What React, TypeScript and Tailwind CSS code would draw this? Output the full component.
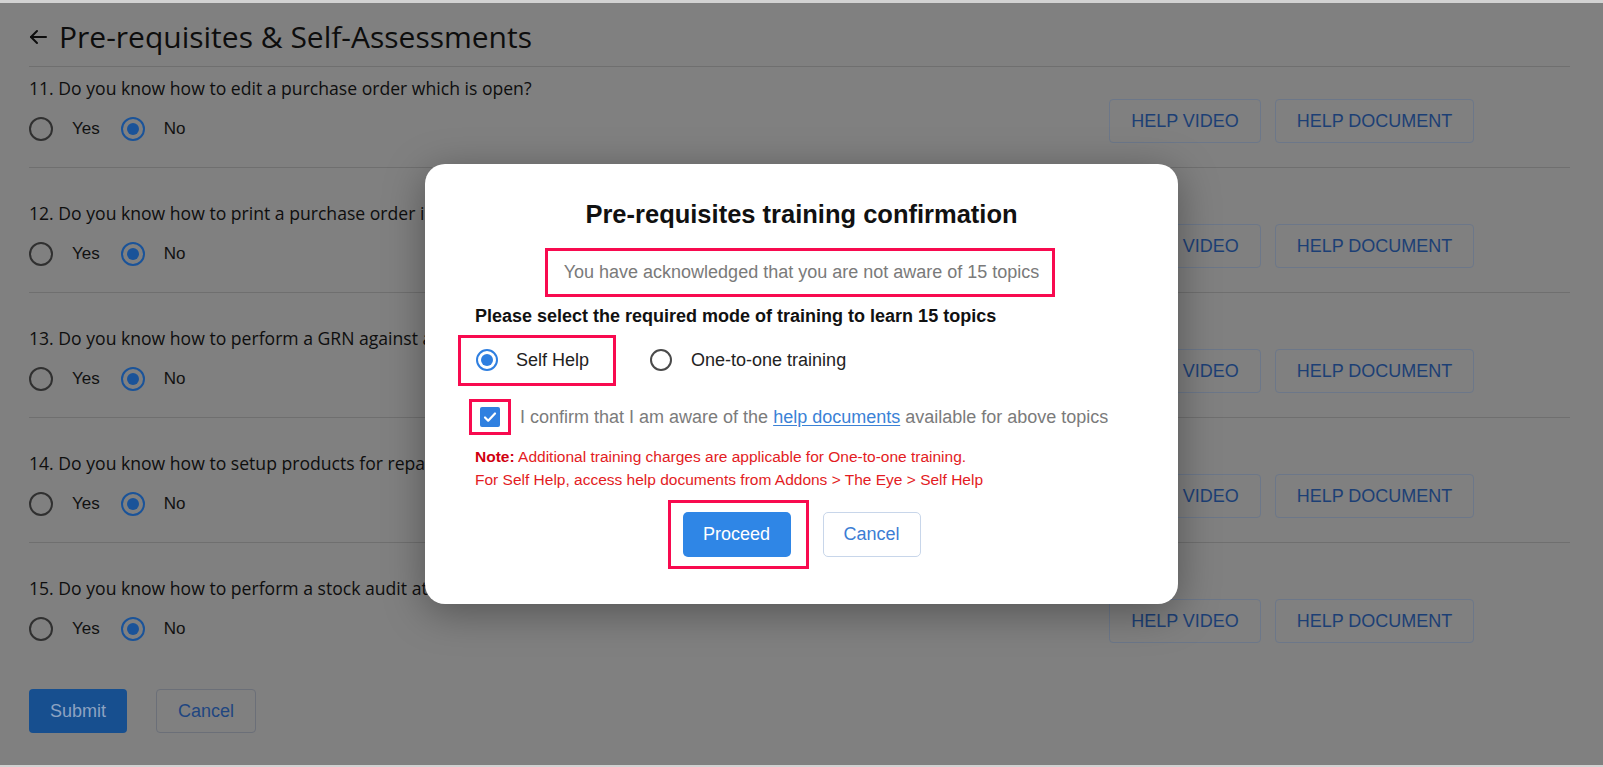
import React from "react";

const questions = [
  "11. Do you know how to edit a purchase order which is open?",
  "12. Do you know how to print a purchase order in PDF format?",
  "13. Do you know how to perform a GRN against a purchase order?",
  "14. Do you know how to setup products for repair and service?",
  "15. Do you know how to perform a stock audit at a location?",
];

function PageRadio({ checked }: { checked: boolean }) {
  return checked ? (
    <span className="flex h-[24px] w-[24px] items-center justify-center rounded-full border-2 border-[#1a5399]">
      <span className="h-[12px] w-[12px] rounded-full bg-[#1a5399]" />
    </span>
  ) : (
    <span className="h-[24px] w-[24px] rounded-full border-2 border-[#303030]" />
  );
}

function ModalRadio({ checked }: { checked: boolean }) {
  return checked ? (
    <span className="flex h-[22px] w-[22px] items-center justify-center rounded-full border-2 border-[#2f7fe0]">
      <span className="h-[12px] w-[12px] rounded-full bg-[#2f7fe0]" />
    </span>
  ) : (
    <span className="h-[22px] w-[22px] rounded-full border-2 border-[#4a4a4a]" />
  );
}

function QuestionRow({ text, first, last }: { text: string; first: boolean; last: boolean }) {
  return (
    <div
      className={`flex ${first ? "pt-[9px]" : "pt-[33px]"} pb-[24px] ${last ? "" : "border-b border-[#6f6f6f]"}`}
    >
      <div className="w-[1080px]">
        <div className="text-[17.6px] leading-[24px] text-[#0e0e0e] [font-family:'Open_Sans',sans-serif]">{text}</div>
        <div className="mt-[16px] flex h-[26px] items-center text-[17px] text-[#111] [font-family:'Liberation_Sans',Arial,sans-serif]">
          <PageRadio checked={false} />
          <span className="ml-[19px]">Yes</span>
          <span className="ml-[21px]">
            <PageRadio checked={true} />
          </span>
          <span className="ml-[19px]">No</span>
        </div>
      </div>
      <div className="mt-[23px] flex gap-[14px] self-start [font-family:'Liberation_Sans',Arial,sans-serif]">
        <div className="flex h-[44px] w-[152px] items-center justify-center rounded-[4px] border border-[#6c7789] text-[18px] text-[#1c3f75]">
          HELP VIDEO
        </div>
        <div className="flex h-[44px] w-[199px] items-center justify-center rounded-[4px] border border-[#6c7789] text-[18px] text-[#1c3f75]">
          HELP DOCUMENT
        </div>
      </div>
    </div>
  );
}

export default function App() {
  return (
    <div className="relative h-[767px] w-[1603px] overflow-hidden border-t-[3px] border-b-[2px] border-[#d2d2d2] bg-[#808080]">
      <div className="ml-[29px] w-[1541px]">
        <div className="flex items-center gap-[12px] border-b border-[#6f6f6f] pt-[16px] pb-[11px]">
          <svg width="18" height="16" viewBox="0 0 18 16" fill="none" stroke="#0d0d0d" strokeWidth="2" strokeLinecap="round" strokeLinejoin="round">
            <path d="M17 8H2" />
            <path d="M8 2L2 8l6 6" />
          </svg>
          <h1 className="text-[30px] leading-[36px] text-[#0d0d0d] [font-family:'Open_Sans',sans-serif]">
            Pre-requisites &amp; Self-Assessments
          </h1>
        </div>
        {questions.map((q, i) => (
          <QuestionRow key={q} text={q} first={i === 0} last={i === questions.length - 1} />
        ))}
        <div className="mt-[22px] flex gap-[29px] [font-family:'Liberation_Sans',Arial,sans-serif]">
          <div className="flex h-[44px] w-[98px] items-center justify-center rounded-[4px] bg-[#174f8f] text-[18px] text-[#8da3c2]">
            Submit
          </div>
          <div className="flex h-[44px] w-[100px] items-center justify-center rounded-[4px] border border-[#6b6f78] text-[18px] text-[#1f4680]">
            Cancel
          </div>
        </div>
      </div>

      <div className="absolute inset-0 flex items-center justify-center">
        <div className="w-[753px] rounded-[20px] bg-white px-[50px] pt-[35px] pb-[47px] shadow-[0_8px_40px_rgba(0,0,0,0.35)] [font-family:'Liberation_Sans',Arial,sans-serif]">
          <h2 className="text-center text-[25.5px] leading-[30px] font-bold text-[#111]">
            Pre-requisites training confirmation
          </h2>
          <div className="mt-[32px] flex justify-center">
            <span className="relative text-[18px] leading-[22px] text-[#7a7a7a]">
              You have acknowledged that you are not aware of 15 topics
              <span className="absolute -top-[13px] -bottom-[14px] -left-[19px] -right-[16px] border-[3px] border-[#f80a4f]" />
            </span>
          </div>
          <div className="mt-[22px] text-[18px] leading-[22px] font-bold text-[#111]">
            Please select the required mode of training to learn 15 topics
          </div>
          <div className="mt-[21px] flex h-[24px] items-center text-[18px] text-[#222]">
            <div className="relative ml-[1px] flex items-center">
              <ModalRadio checked={true} />
              <span className="ml-[18px]">Self Help</span>
              <span className="absolute -top-[12px] -bottom-[12px] -left-[18px] -right-[27px] border-[3px] border-[#f80a4f]" />
            </div>
            <div className="ml-[61px] flex items-center">
              <ModalRadio checked={false} />
              <span className="ml-[19px]">One-to-one training</span>
            </div>
          </div>
          <div className="mt-[34px] flex h-[22px] items-center text-[18px] text-[#7b7b7b]">
            <span className="relative ml-[5px] flex h-[20px] w-[20px] items-center justify-center rounded-[2px] bg-[#2f80e0]">
              <svg width="14" height="14" viewBox="0 0 14 14" fill="none" stroke="white" strokeWidth="2.2" strokeLinecap="round" strokeLinejoin="round">
                <path d="M2 7.5l3.2 3.2L12 3.5" />
              </svg>
              <span className="absolute -top-[8px] -bottom-[8px] -left-[11px] -right-[11px] border-[3px] border-[#f80a4f]" />
            </span>
            <span className="ml-[20px]">
              I confirm that I am aware of the{" "}
              <span className="text-[#3b82d6] underline underline-offset-2">help documents</span> available for above
              topics
            </span>
          </div>
          <div className="mt-[18px] text-[15.5px] leading-[22.5px] text-[#e31b23]">
            <p>
              <b className="font-bold text-[#d0000f]">Note:</b> Additional training charges are applicable for
              One-to-one training.
            </p>
            <p>For Self Help, access help documents from Addons &gt; The Eye &gt; Self Help</p>
          </div>
          <div className="mt-[21px] flex justify-center gap-[32px]">
            <div className="relative">
              <div className="flex h-[45px] w-[108px] items-center justify-center rounded-[5px] bg-[#2f86e6] text-[18px] text-white">
                Proceed
              </div>
              <span className="absolute -top-[12px] -bottom-[12px] -left-[15px] -right-[18px] border-[3px] border-[#f80a4f]" />
            </div>
            <div className="flex h-[45px] w-[98px] items-center justify-center rounded-[5px] border border-[#c8d6ea] text-[18px] text-[#3c7dd4]">
              Cancel
            </div>
          </div>
        </div>
      </div>
    </div>
  );
}
